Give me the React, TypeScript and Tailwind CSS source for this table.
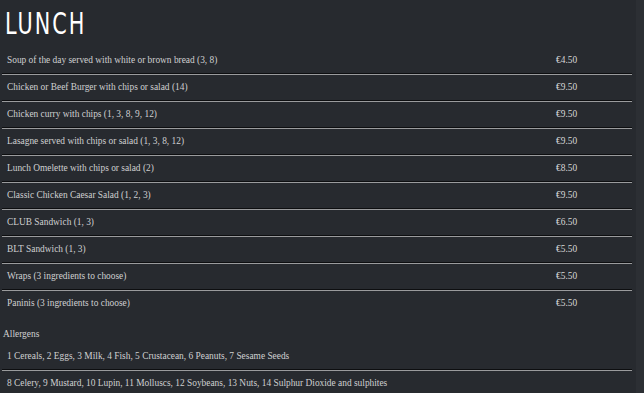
import React from "react";

const items: [string, string][] = [
  ["Soup of the day served with white or brown bread (3, 8)", "€4.50"],
  ["Chicken or Beef Burger with chips or salad (14)", "€9.50"],
  ["Chicken curry with chips (1, 3, 8, 9, 12)", "€9.50"],
  ["Lasagne served with chips or salad (1, 3, 8, 12)", "€9.50"],
  ["Lunch Omelette with chips or salad (2)", "€8.50"],
  ["Classic Chicken Caesar Salad (1, 2, 3)", "€9.50"],
  ["CLUB Sandwich (1, 3)", "€6.50"],
  ["BLT Sandwich (1, 3)", "€5.50"],
  ["Wraps (3 ingredients to choose)", "€5.50"],
  ["Paninis (3 ingredients to choose)", "€5.50"],
];

function Rule() {
  return <div className="shrink-0 h-[2px] border-t border-t-[#0d0e10] border-b border-b-[#9a9b9d]" />;
}

export default function App() {
  return (
    <div
      className="flex w-[644px] h-[393px] overflow-hidden bg-[#272a2f] text-[#cfd0d1]"
      style={{ fontFamily: '"Liberation Serif", "DejaVu Serif", serif' }}
    >
      <div className="w-[636px] flex flex-col">
        <div className="shrink-0 h-[48px] pl-[5px] pt-[6px]">
          <h1
            className="text-[31px] leading-[34px] text-white tracking-[3px] origin-left scale-x-[0.67]"
            style={{ fontFamily: '"DejaVu Sans", sans-serif' }}
          >
            LUNCH
          </h1>
        </div>
        <div className="shrink-0 w-[630px] ml-[2px] flex flex-col">
          {items.map(([name, price], i) => (
            <React.Fragment key={i}>
              <div className="shrink-0 h-[25px] flex items-center text-[9.4px]">
                <div className="flex-1 pl-[5px]">{name}</div>
                <div className="w-[76px] text-[#d8d8d8]">{price}</div>
              </div>
              {i < items.length - 1 && <Rule />}
            </React.Fragment>
          ))}
        </div>
        <div className="shrink-0 ml-[3px] mt-[8px] text-[9.4px] h-[20px] flex items-center">Allergens</div>
        <div className="shrink-0 w-[630px] ml-[2px] flex flex-col text-[9.4px]">
          <div className="shrink-0 h-[25px] flex items-center pl-[5px]">
            1 Cereals, 2 Eggs, 3 Milk, 4 Fish, 5 Crustacean, 6 Peanuts, 7 Sesame Seeds
          </div>
          <Rule />
          <div className="shrink-0 h-[25px] flex items-center pl-[5px]">
            8 Celery, 9 Mustard, 10 Lupin, 11 Molluscs, 12 Soybeans, 13 Nuts, 14 Sulphur Dioxide and sulphites
          </div>
        </div>
      </div>
      <div className="w-[8px] bg-[#2c2f34]" />
    </div>
  );
}
